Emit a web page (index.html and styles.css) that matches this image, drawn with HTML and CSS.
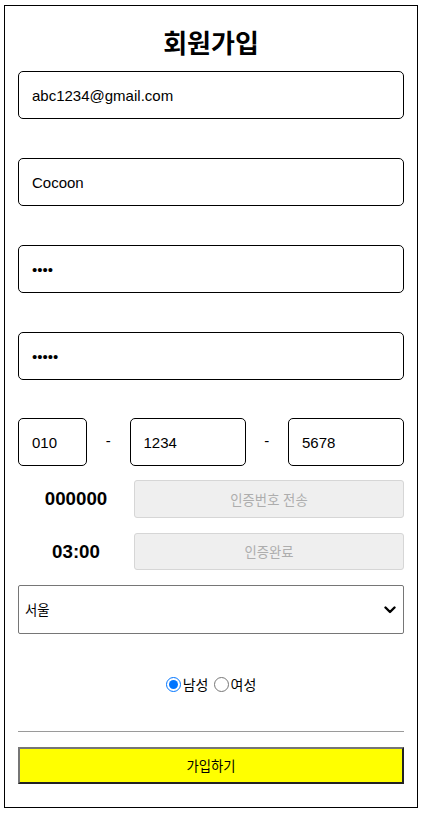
FILE: index.html
```html
<!DOCTYPE html>
<html lang="ko">
<head>
<meta charset="utf-8">
<title>회원가입</title>
<link rel="stylesheet" href="styles.css">
</head>
<body>
<div class="wrap">
  <h1 class="title">회원가입</h1>
  <input class="field" type="text" value="abc1234@gmail.com">
  <input class="field gap" type="text" value="Cocoon">
  <input class="field gap" type="password" value="1234">
  <input class="field gap" type="password" value="12345">
  <div class="phone">
    <input class="field p1" type="text" value="010">
    <span class="dash">-</span>
    <input class="field p2" type="text" value="1234">
    <span class="dash">-</span>
    <input class="field p2" type="text" value="5678">
  </div>
  <div class="auth a1">
    <div class="code">000000</div>
    <button class="dis" disabled>인증번호 전송</button>
  </div>
  <div class="auth a2">
    <div class="code">03:00</div>
    <button class="dis" disabled>인증완료</button>
  </div>
  <div class="select-box">
    <select class="city">
      <option>서울</option>
      <option>부산</option>
    </select>
    <svg class="chev" width="12" height="8" viewBox="0 0 12 8" aria-hidden="true">
      <path d="M1.5 1.5 L6 6 L10.5 1.5" fill="none" stroke="#000" stroke-width="2.4" stroke-linecap="round" stroke-linejoin="round"/>
    </svg>
  </div>
  <div class="gender">
    <input type="radio" name="g" id="m" checked><label for="m">남성</label>
    <input type="radio" name="g" id="f"><label for="f">여성</label>
  </div>
  <hr class="line">
  <button class="join">가입하기</button>
</div>
</body>
</html>
```

FILE: styles.css
```css
html, body {
  margin: 0;
  padding: 0;
  background: #fff;
}
body {
  font-family: "Liberation Sans", "Noto Sans CJK KR", sans-serif;
  color: #000;
}
.wrap {
  margin: 5px 3px 4px 4px;
  border: 1px solid #000;
  padding: 0 13px 23px;
  display: flex;
  flex-direction: column;
}
.title {
  margin: 16px 0 9px;
  font-size: 26px;
  line-height: 40px;
  font-weight: 700;
  text-align: center;
  font-family: "Noto Sans CJK KR", sans-serif;
}
.field {
  box-sizing: border-box;
  height: 48px;
  width: 100%;
  margin: 0;
  border: 1px solid #000;
  border-radius: 5px;
  padding: 0 13px;
  font-family: "Liberation Sans", "Noto Sans CJK KR", sans-serif;
  font-size: 15px;
  color: #000;
  background: #fff;
  outline: none;
}
.gap {
  margin-top: 39px;
}
.phone {
  margin-top: 38px;
  display: flex;
  align-items: center;
}
.phone .p1 {
  width: 69px;
  flex: none;
}
.phone .p2 {
  width: 116px;
  flex: none;
}
.dash {
  flex: 1;
  text-align: center;
  font-size: 15px;
  padding-bottom: 4px;
}
.auth {
  display: grid;
  grid-template-columns: 116px 1fr;
  align-items: center;
}
.a1 {
  margin-top: 14px;
  height: 38px;
}
.a2 {
  margin-top: 15px;
  height: 37px;
}
.code {
  text-align: center;
  font-size: 18.72px;
  font-weight: 700;
}
.dis {
  height: 100%;
  margin: 0;
  border: 1px solid #d6d6d6;
  border-radius: 3px;
  background: #efefef;
  color: #adadad;
  font-family: "Noto Sans CJK KR", sans-serif;
  font-size: 13.333px;
}
.select-box {
  margin-top: 15px;
  position: relative;
  display: flex;
}
.city {
  flex: 1;
  -webkit-appearance: none;
  appearance: none;
  height: 49px;
  box-sizing: border-box;
  border: 1px solid #767676;
  border-radius: 2px;
  background: #fff;
  font-family: "Noto Sans CJK KR", sans-serif;
  font-size: 13.333px;
  padding: 0 6px;
  color: #000;
  outline: none;
}
.chev {
  position: absolute;
  right: 8px;
  top: 21px;
  pointer-events: none;
}
.gender {
  margin-top: 40px;
  height: 20px;
  display: flex;
  justify-content: center;
  align-items: center;
  font-family: "Noto Sans CJK KR", sans-serif;
  font-size: 14px;
}
.gender input {
  margin: 0 2px 0 0;
  width: 15px;
  height: 15px;
}
.gender label {
  margin-right: 5px;
}
.gender label:last-child {
  margin-right: 0;
}
.line {
  margin: 37px 0 15px;
  border: 0;
  border-top: 1px solid #9a9a9a;
  height: 0;
}
.join {
  height: 37px;
  margin: 0;
  background: #ff0;
  border-style: solid;
  border-width: 2px;
  border-color: #767676 #222 #222 #767676;
  font-family: "Noto Sans CJK KR", sans-serif;
  font-size: 13.333px;
  color: #000;
}
```
